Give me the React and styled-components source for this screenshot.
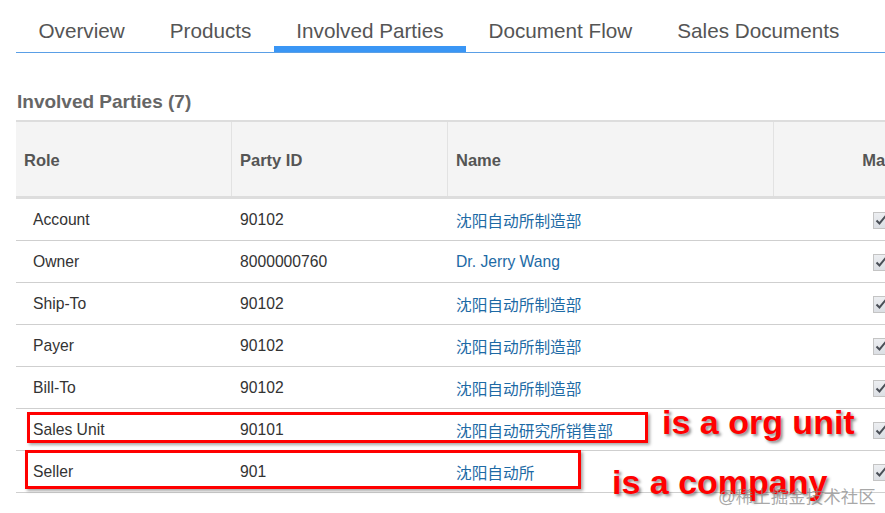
import React from "react";
import styled, { createGlobalStyle } from "styled-components";

const GlobalStyle = createGlobalStyle`
  html, body {
    margin: 0;
    padding: 0;
    background: #fff;
    overflow: hidden;
  }
  body {
    font-family: "Liberation Sans", Arial, "Noto Sans CJK SC", sans-serif;
  }
`;

const Page = styled.div`
  position: relative;
  width: 885px;
  height: 513px;
  padding-left: 16px;
  box-sizing: border-box;
  overflow: hidden;
`;

const TabBar = styled.div`
  display: flex;
  border-bottom: 1px solid #5a9fe6;
  height: 52px;
  box-sizing: content-box;
`;

const Tab = styled.div`
  padding: 19px 22.5px 0;
  height: 52px;
  box-sizing: border-box;
  font-size: 20.7px;
  line-height: 24px;
  color: #555;
  white-space: nowrap;
  border-bottom: 6px solid ${(p) => (p.$active ? "#3a96f5" : "transparent")};
`;

const Title = styled.h2`
  margin: 37px 0 6px 1px;
  height: 24px;
  line-height: 24px;
  font-size: 19px;
  font-weight: bold;
  color: #666;
`;

const TableWrap = styled.div`
  position: relative;
  width: 972px;
`;

const Grid = styled.div`
  display: grid;
  grid-template-columns: 216px 216px 326px 214px;
`;

const HeadRow = styled(Grid)`
  border-top: 2px solid #ddd;
  border-bottom: 3px solid #ddd;
  background: #f4f4f4;
  height: 74px;
`;

const HeadCell = styled.div`
  display: flex;
  align-items: center;
  justify-content: ${(p) => (p.$center ? "center" : "flex-start")};
  padding-left: ${(p) => (p.$center ? "0" : "8px")};
  padding-top: 2px;
  font-size: 16.5px;
  font-weight: bold;
  color: #555;
  border-left: ${(p) => (p.$first ? "none" : "1px solid #e2e2e2")};
  margin-left: ${(p) => (p.$first ? "0" : "-1px")};
`;

const Row = styled(Grid)`
  height: 42px;
  box-sizing: border-box;
  border-bottom: 1px solid #cfcfcf;
`;

const Cell = styled.div`
  display: flex;
  align-items: center;
  justify-content: ${(p) => (p.$center ? "center" : "flex-start")};
  padding-left: ${(p) => p.$pad || "0"};
  padding-top: 1px;
  font-size: 15.7px;
  color: #333;
  white-space: nowrap;
`;

const NameLink = styled.a`
  color: #1d6aa5;
  text-decoration: none;
  font-size: 15.7px;
  font-family: "Liberation Sans", Arial, "Noto Sans CJK SC", sans-serif;
`;

const CheckBox = styled.span`
  width: 17px;
  height: 17px;
  box-sizing: border-box;
  border: 1px solid #c4c4c4;
  background: linear-gradient(#eceef1, #dcdfe4);
  display: flex;
  align-items: center;
  justify-content: center;
`;

const RedBox = styled.div`
  position: absolute;
  border: 3px solid #f00;
  box-shadow: 2px 2px 3px rgba(0, 0, 0, 0.35);
  box-sizing: border-box;
`;

const Note = styled.div`
  position: absolute;
  font-size: 34px;
  line-height: 34px;
  font-weight: bold;
  color: #f00;
  white-space: nowrap;
  text-shadow: 2px 2px 3px rgba(0, 0, 0, 0.45);
`;

const Watermark = styled.div`
  position: absolute;
  left: 718px;
  top: 486px;
  font-size: 17.5px;
  line-height: 22px;
  color: rgba(140, 140, 140, 0.75);
  font-family: "Liberation Sans", "Noto Sans CJK SC", sans-serif;
  white-space: nowrap;
`;

const tabs = ["Overview", "Products", "Involved Parties", "Document Flow", "Sales Documents"];

const parties = [
  { role: "Account", id: "90102", name: "沈阳自动所制造部" },
  { role: "Owner", id: "8000000760", name: "Dr. Jerry Wang" },
  { role: "Ship-To", id: "90102", name: "沈阳自动所制造部" },
  { role: "Payer", id: "90102", name: "沈阳自动所制造部" },
  { role: "Bill-To", id: "90102", name: "沈阳自动所制造部" },
  { role: "Sales Unit", id: "90101", name: "沈阳自动研究所销售部" },
  { role: "Seller", id: "901", name: "沈阳自动所" },
];

const Check = () => (
  <svg width="14" height="14" viewBox="0 0 14 14">
    <path d="M2.5 7.5 L5.5 10.5 L12 2.5" fill="none" stroke="#4a4f57" strokeWidth="2" />
  </svg>
);

export default function App() {
  return (
    <>
      <GlobalStyle />
      <Page>
        <TabBar>
          {tabs.map((t) => (
            <Tab key={t} $active={t === "Involved Parties"}>
              {t}
            </Tab>
          ))}
        </TabBar>
        <Title>Involved Parties (7)</Title>
        <TableWrap>
          <HeadRow>
            <HeadCell $first>Role</HeadCell>
            <HeadCell>Party ID</HeadCell>
            <HeadCell>Name</HeadCell>
            <HeadCell $center>Main</HeadCell>
          </HeadRow>
          {parties.map((p) => (
            <Row key={p.role}>
              <Cell $pad="17px">{p.role}</Cell>
              <Cell $pad="8px">{p.id}</Cell>
              <Cell $pad="8px">
                <NameLink href="#">{p.name}</NameLink>
              </Cell>
              <Cell $center>
                <CheckBox>
                  <Check />
                </CheckBox>
              </Cell>
            </Row>
          ))}
          <RedBox style={{ left: 11, top: 292, width: 621, height: 31 }} />
          <RedBox style={{ left: 9, top: 330, width: 556, height: 39 }} />
          <Note style={{ left: 646, top: 285 }}>is a org unit</Note>
          <Note style={{ left: 596, top: 345 }}>is a company</Note>
        </TableWrap>
        <Watermark>@稀土掘金技术社区</Watermark>
      </Page>
    </>
  );
}
